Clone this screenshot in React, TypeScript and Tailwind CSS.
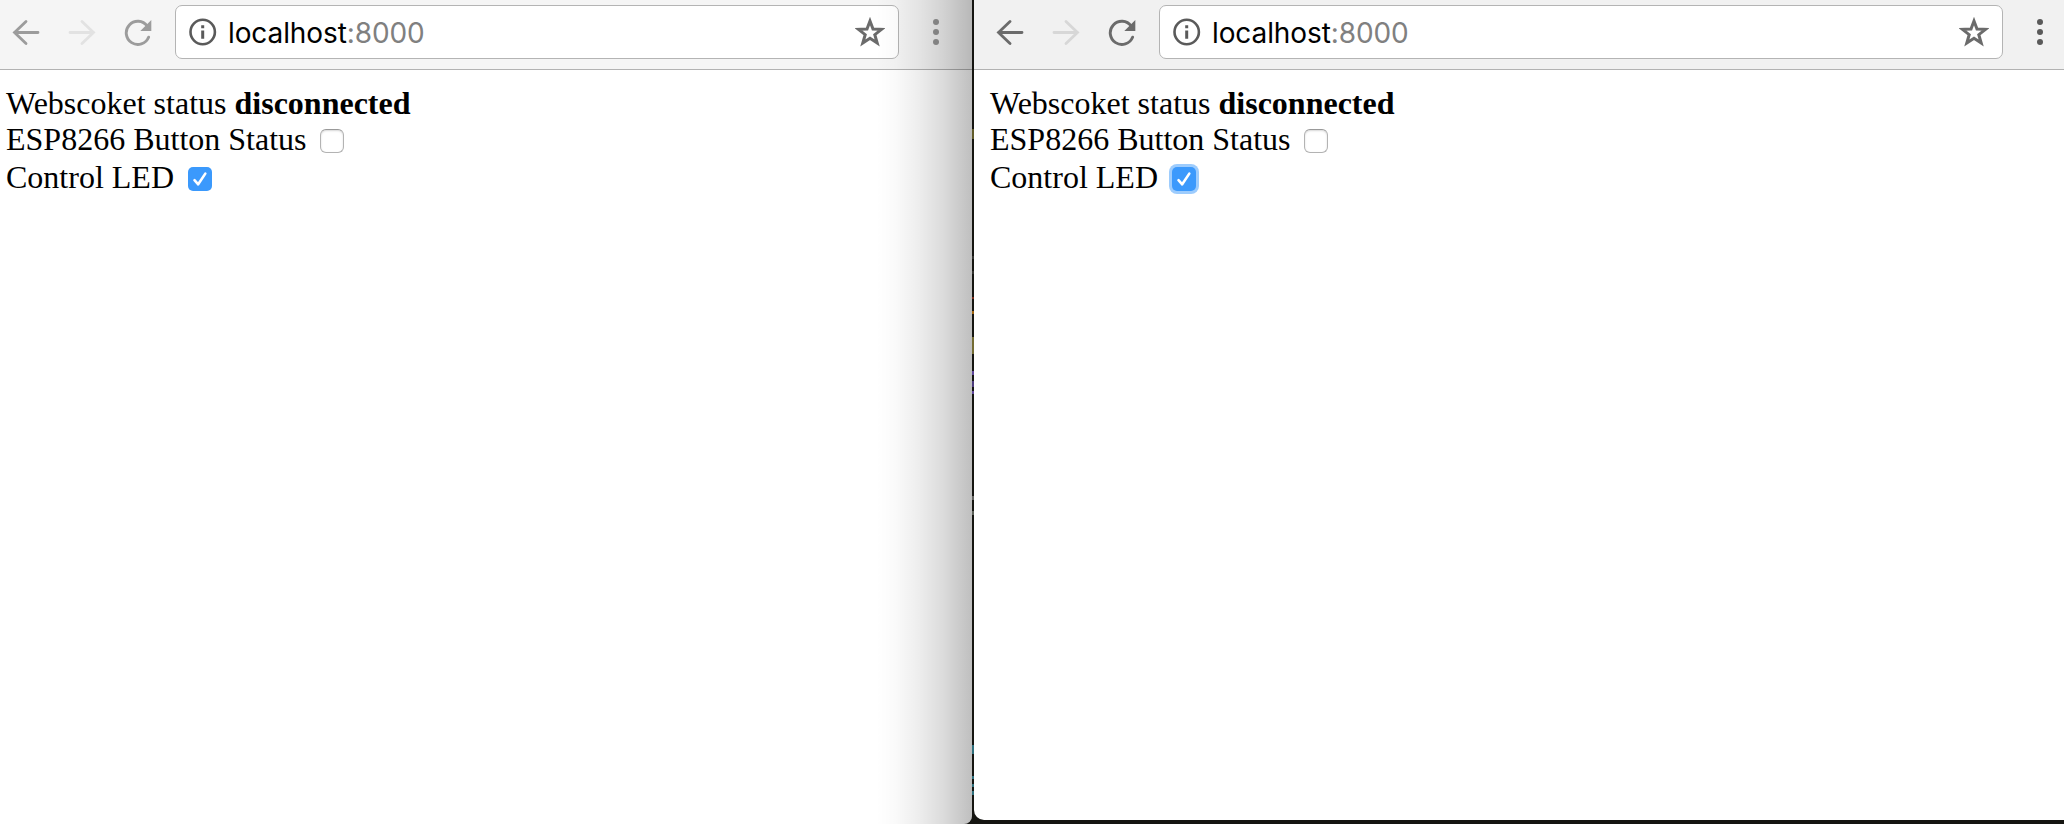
import React from 'react';

function BackArrow({ className = '' }: { className?: string }) {
  return (
    <svg viewBox="0 0 28 28" className={`size-7 shrink-0 ${className}`} fill="none" stroke="currentColor" strokeWidth="2.8" strokeLinecap="round">
      <path d="M26 14.5H2.5M14 3.4L2.5 14.5L14 25.6" />
    </svg>
  );
}

function Reload() {
  return (
    <svg viewBox="0 0 28 28" className="size-7 shrink-0">
      <path d="M23.2 8A11.6 11.6 0 1 0 24.6 19.2" fill="none" stroke="currentColor" strokeWidth="2.9" strokeLinecap="round" />
      <path d="M27.3 2V13H16.3Z" fill="currentColor" />
    </svg>
  );
}

function AddressBar() {
  return (
    <div className="flex h-[54px] min-w-0 flex-1 items-center rounded-[7px] border border-[#b4b4b4] bg-white px-[13px]">
      <svg viewBox="0 0 28 28" className="size-7 shrink-0 text-[#5a5a5a]">
        <circle cx="13.7" cy="14" r="12.2" fill="none" stroke="currentColor" strokeWidth="2.6" />
        <path d="M12.2 7.2h3v3h-3zM12.2 12.4h3v8.4h-3z" fill="currentColor" />
      </svg>
      <div className="ml-[11px] flex-1 pt-[2px] font-['Inter',sans-serif] text-[28px] leading-[34px] tracking-[-0.1px] text-black">
        localhost<span className="text-[#808080]">:8000</span>
      </div>
      <svg viewBox="0 0 30 30" className="size-[30px] shrink-0 text-[#6b6b6b]" fill="none" stroke="currentColor" strokeWidth="3">
        <path d="M15 4L18 12L26.5 12.3L19.8 17.7L22.2 26L15 21.3L7.8 26L10.2 17.7L3.5 12.3L12 12Z" />
      </svg>
    </div>
  );
}

function Checkbox({ checked = false, focused = false }: { checked?: boolean; focused?: boolean }) {
  if (!checked) {
    return <span className="size-6 rounded-[6px] border border-[#b3b3b3] border-t-[#999999] bg-white shadow-[inset_0_1px_2px_rgba(0,0,0,0.16)]" />;
  }
  return (
    <span className={`size-6 rounded-[5px] bg-[#3b99fc] ${focused ? 'shadow-[0_0_0_3px_#9dccfd]' : ''}`}>
      <svg viewBox="0 0 24 24" className="size-6" fill="none" stroke="white" strokeWidth="2.6" strokeLinecap="round" strokeLinejoin="round">
        <path d="M6.5 13.2L10.2 17.3L17.3 6.6" />
      </svg>
    </span>
  );
}

function BrowserWindow({ active }: { active: boolean }) {
  return (
    <>
      <header className={`flex h-[70px] items-start border-b border-[#b2b2b2] pt-[5px] ${active ? 'bg-[#f1f1f1] pr-[21px] pl-[22px]' : 'bg-[#f5f5f5] pr-[33px] pl-3'}`}>
        <div className={`flex h-[54px] items-center gap-7 ${active ? 'text-[#6b6b6b]' : 'text-[#9c9c9c]'}`}>
          <BackArrow />
          <BackArrow className={`-scale-x-100 ${active ? 'text-[#d7d7d7]' : 'text-[#e2e2e2]'}`} />
          <Reload />
        </div>
        <div className="w-[23px] shrink-0" />
        <AddressBar />
        <div className="ml-[34px] flex h-[54px] w-1.5 shrink-0 flex-col items-center justify-center gap-1">
          {[0, 1, 2].map((n) => (
            <span key={n} className={`size-1.5 shrink-0 rounded-full ${active ? 'bg-[#5a5a5a]' : 'bg-[#949494]'}`} />
          ))}
        </div>
      </header>
      <main className={`pt-[15px] font-['Liberation_Serif',serif] text-[32px] leading-[36px] text-black ${active ? 'pl-4' : 'pl-1.5'}`}>
        <p>Webscoket status <b>disconnected</b></p>
        <div className="flex h-[38px] items-start">
          ESP8266 Button Status
          <span className="mt-2 ml-[13px] flex"><Checkbox /></span>
        </div>
        <div className="flex h-[38px] items-start">
          Control LED
          <span className="mt-2 ml-[14px] flex"><Checkbox checked focused={active} /></span>
        </div>
      </main>
    </>
  );
}

function DesktopGap() {
  return (
    <div className="flex h-full w-[2px] shrink-0 flex-col">
      <i className="mt-[129px] h-[10px] bg-[#625c2a]" />
      <i className="mt-[117px] h-[3px] bg-[#33332f]" />
      <i className="mt-[12px] h-[3px] bg-[#33332f]" />
      <i className="mt-[23px] h-[2px] bg-[#7a2a18]" />
      <i className="mt-[12px] h-[3px] bg-[#a0640f]" />
      <i className="mt-[23px] h-[17px] bg-[#746c33]" />
      <i className="mt-[17px] h-[4px] bg-[#5f479a]" />
      <i className="mt-[6px] h-[6px] bg-[#4d3b7c]" />
      <i className="mt-[4px] h-[3px] bg-[#5f479a]" />
      <i className="mt-[102px] h-[4px] bg-[#63635f]" />
      <i className="mt-[11px] h-[4px] bg-[#5c6058]" />
      <i className="mt-[230px] h-[9px] bg-[#2f6f7c]" />
      <i className="mt-[22px] h-[3px] bg-[#2f6f7c]" />
      <i className="mt-[5px] h-[3px] bg-[#2f6f7c]" />
      <i className="mt-[4px] h-[4px] bg-[#2f6f7c]" />
    </div>
  );
}

export default function App() {
  return (
    <div className="flex h-[824px] w-[2064px] overflow-hidden bg-[#151511]">
      <section className="relative w-[972px] shrink-0 overflow-hidden rounded-br-[8px] bg-white">
        <BrowserWindow active={false} />
        <div className="pointer-events-none absolute inset-y-0 right-0 w-[96px] bg-[linear-gradient(to_right,rgba(0,0,0,0)_0%,rgba(0,0,0,0.02)_20%,rgba(0,0,0,0.07)_45%,rgba(0,0,0,0.14)_70%,rgba(0,0,0,0.25)_100%)]" />
      </section>
      <DesktopGap />
      <section className="h-[820px] flex-1 overflow-hidden rounded-bl-[10px] bg-white">
        <BrowserWindow active />
      </section>
    </div>
  );
}
